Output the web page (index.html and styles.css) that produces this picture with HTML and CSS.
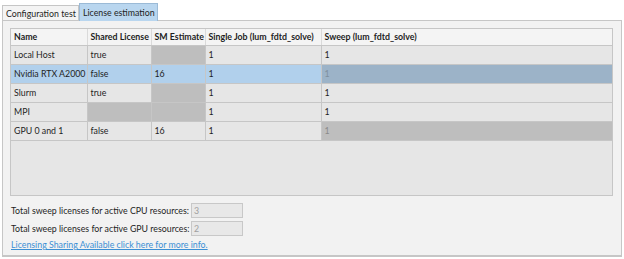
FILE: index.html
```html
<!DOCTYPE html>
<html lang="en">
<head>
    <meta charset="UTF-8">
    <title>License estimation</title>
    <link rel="stylesheet" href="styles.css">
</head>
<body>
    <div class="window">
        <div class="tabs">
            <div class="tab">Configuration test</div>
            <div class="tab active">License estimation</div>
        </div>

        <div class="panel">
            <!-- resource table -->
            <div class="table-frame">
                <table class="grid">
                    <thead>
                        <tr>
                            <th class="c-name">Name</th>
                            <th class="c-shared">Shared License</th>
                            <th class="c-sm">SM Estimate</th>
                            <th class="c-single">Single Job (lum_fdtd_solve)</th>
                            <th>Sweep (lum_fdtd_solve)</th>
                        </tr>
                    </thead>
                    <tbody>
                        <tr>
                            <td>Local Host</td>
                            <td>true</td>
                            <td class="off"></td>
                            <td>1</td>
                            <td>1</td>
                        </tr>
                        <tr class="selected">
                            <td>Nvidia RTX A2000</td>
                            <td>false</td>
                            <td>16</td>
                            <td>1</td>
                            <td class="dim">1</td>
                        </tr>
                        <tr>
                            <td>Slurm</td>
                            <td>true</td>
                            <td class="off"></td>
                            <td>1</td>
                            <td>1</td>
                        </tr>
                        <tr>
                            <td>MPI</td>
                            <td class="off"></td>
                            <td class="off"></td>
                            <td>1</td>
                            <td>1</td>
                        </tr>
                        <tr>
                            <td>GPU 0 and 1</td>
                            <td>false</td>
                            <td>16</td>
                            <td>1</td>
                            <td class="dim">1</td>
                        </tr>
                    </tbody>
                </table>
            </div>

            <div class="totals">
                <div class="total-row">
                    <span class="total-label">Total sweep licenses for active CPU resources:</span>
                    <span class="total-box">3</span>
                </div>
                <div class="total-row">
                    <span class="total-label">Total sweep licenses for active GPU resources:</span>
                    <span class="total-box">2</span>
                </div>
                <a class="info-link" href="#">Licensing Sharing Available click here for more info.</a>
            </div>
        </div>
    </div>
</body>
</html>
```

FILE: styles.css
```css
:root {
    --panel: #f2f2f2;
    --line: #c6c6c6;
    --cell: #e6e6e6;
    --off: #bebebe;
    --select: #b1d0ec;
    --select-dim: #9cb3c8;
    --text: #1e1e1e;
    --link: #3b8fd4;
}

* {
    box-sizing: border-box;
    margin: 0;
    padding: 0;
}

body {
    font-family: 'Lato', 'Open Sans', sans-serif;
    font-size: 8.8px;
    color: var(--text);
    background: #ffffff;
}

.window {
    width: 624px;
    height: 259px;
    padding: 3px 2px 2px 2px;
    display: flex;
    flex-direction: column;
}

.tabs {
    display: flex;
    align-items: flex-end;
    height: 18px;
    margin-bottom: -1px;
}

.tab {
    height: 16px;
    padding: 0 2px 0 3px;
    line-height: 15px;
    background: #f4f4f4;
    border: 1px solid var(--line);
    border-bottom: none;
}

.tab.active {
    height: 18px;
    line-height: 17px;
    background: #b9d6ef;
    border-color: #9bbad6;
    position: relative;
}

.panel {
    flex: 1;
    background: var(--panel);
    border: 1px solid var(--line);
    border-bottom-width: 2px;
    padding: 7px 8px 0 7px;
}

.table-frame {
    height: 168px;
    background: var(--cell);
    border: 1px solid var(--line);
}

.grid {
    width: 100%;
    border-collapse: collapse;
    table-layout: fixed;
}

.grid th,
.grid td {
    text-align: left;
    white-space: nowrap;
    overflow: hidden;
    padding: 0 2px 0 3px;
    border-right: 1px solid var(--line);
    border-bottom: 1px solid var(--line);
}

.grid th:last-child,
.grid td:last-child {
    border-right: none;
}

.grid th {
    height: 16px;
    font-weight: 700;
    background: #f4f4f4;
    border-right-color: #dadada;
}

.grid td {
    height: 19px;
    background: var(--cell);
}

.c-name { width: 76px; }
.c-shared { width: 64px; }
.c-sm { width: 54px; }
.c-single { width: 116px; }

.grid td.off {
    background: var(--off);
}

.grid td.dim {
    background: var(--off);
    color: #8a8a8a;
}

.grid tr.selected td {
    background: var(--select);
}

.grid tr.selected td.dim {
    background: var(--select-dim);
    color: #7f8f9d;
}

.totals {
    padding-top: 5px;
    padding-left: 1px;
}

.total-row {
    display: flex;
    align-items: center;
    height: 18px;
}

.total-label {
    flex-shrink: 0;
    width: 180px;
    white-space: nowrap;
}

.total-box {
    width: 52px;
    height: 15px;
    line-height: 13px;
    padding-left: 2px;
    color: #a0a0a0;
    background: #e8e8e8;
    border: 1px solid #c8c8c8;
}

.info-link {
    display: block;
    margin-top: 2px;
    color: var(--link);
    text-decoration: underline;
}
```
